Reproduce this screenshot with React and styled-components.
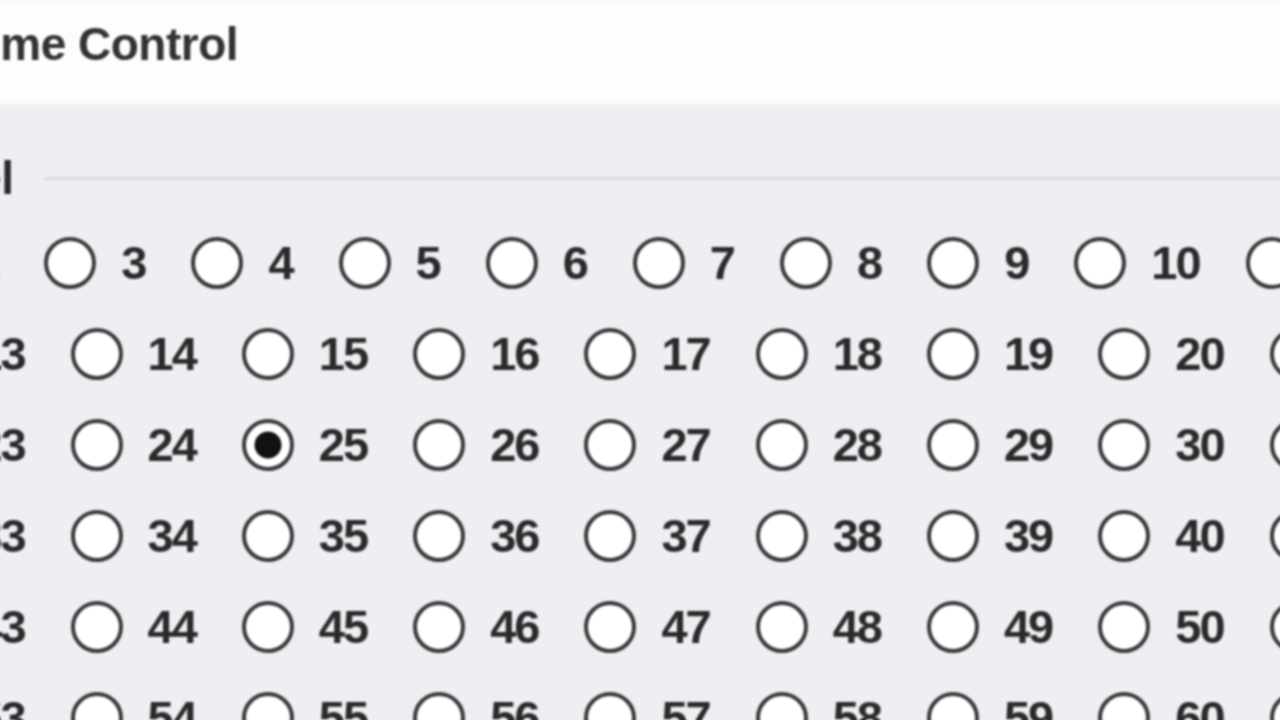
import React from "react";
import styled, { createGlobalStyle } from "styled-components";

const GlobalStyle = createGlobalStyle`
  html, body {
    margin: 0;
    padding: 0;
    background: #efeef3;
    overflow: hidden;
  }
`;

const Viewport = styled.div`
  width: 1280px;
  height: 720px;
  overflow: hidden;
  background: #efeef3;
  font-family: "Liberation Sans", Arial, sans-serif;
  color: #2a2a2a;
`;

const Window = styled.div`
  width: 1900px;
  margin-left: -320px;
  filter: blur(1.2px);
`;

const TitleBar = styled.div`
  height: 104px;
  background: #fdfdfd;
  display: flex;
  align-items: center;
  padding: 0 0 16px 226px;
  box-sizing: border-box;
`;

const Title = styled.span`
  font-size: 46px;
  font-weight: 700;
  letter-spacing: -0.5px;
  color: #333;
  white-space: nowrap;
`;

const Body = styled.div`
  padding: 49px 0 0 20px;
  background: #efeef3;
`;

const GroupBox = styled.div`
  display: flex;
  flex-direction: column;
`;

const GroupHeader = styled.div`
  display: flex;
  align-items: center;
  height: 50px;
  padding-left: 21px;
  gap: 30px;
`;

const GroupLabel = styled.span`
  font-size: 46px;
  font-weight: 700;
  line-height: 50px;
  white-space: nowrap;
`;

const GroupLine = styled.div`
  flex: 1;
  height: 3px;
  background: #dcdce1;
`;

const Options = styled.div`
  margin-top: 14px;
  display: flex;
  flex-direction: column;
`;

const Row = styled.div`
  display: flex;
  align-items: center;
  height: 91px;
  gap: 46px;
  padding-left: ${({ $indent }) => $indent}px;
`;

const Option = styled.label`
  display: flex;
  align-items: center;
  gap: 25px;
  cursor: pointer;
`;

const Circle = styled.span`
  position: relative;
  width: 52px;
  height: 52px;
  box-sizing: border-box;
  border: 4.5px solid #3a3a3a;
  border-radius: 50%;
  background: #ffffff;
  flex-shrink: 0;

  &::after {
    content: "";
    position: absolute;
    left: 50%;
    top: 50%;
    width: 27px;
    height: 27px;
    border-radius: 50%;
    background: #111;
    transform: translate(-50%, -50%);
    display: ${({ $checked }) => ($checked ? "block" : "none")};
  }
`;

const OptionText = styled.span`
  font-size: 47px;
  font-weight: 700;
  letter-spacing: -2px;
  line-height: 1;
  white-space: nowrap;
`;

const range = (a, b) => Array.from({ length: b - a + 1 }, (_, i) => a + i);

const rows = [
  { items: range(1, 11), indent: 50 },
  { items: range(12, 21), indent: 28 },
  { items: range(22, 31), indent: 28 },
  { items: range(32, 41), indent: 28 },
  { items: range(42, 51), indent: 28 },
  { items: range(52, 61), indent: 28 },
];

export default function App() {
  const selected = 25;
  return (
    <>
      <GlobalStyle />
      <Viewport>
        <Window>
          <TitleBar>
            <Title>Volume Control</Title>
          </TitleBar>
          <Body>
            <GroupBox>
              <GroupHeader>
                <GroupLabel>Volume Level</GroupLabel>
                <GroupLine />
              </GroupHeader>
              <Options>
                {rows.map((row, r) => (
                  <Row key={r} $indent={row.indent}>
                    {row.items.map((n) => (
                      <Option key={n}>
                        <Circle $checked={n === selected} />
                        <OptionText>{n}</OptionText>
                      </Option>
                    ))}
                  </Row>
                ))}
              </Options>
            </GroupBox>
          </Body>
        </Window>
      </Viewport>
    </>
  );
}
